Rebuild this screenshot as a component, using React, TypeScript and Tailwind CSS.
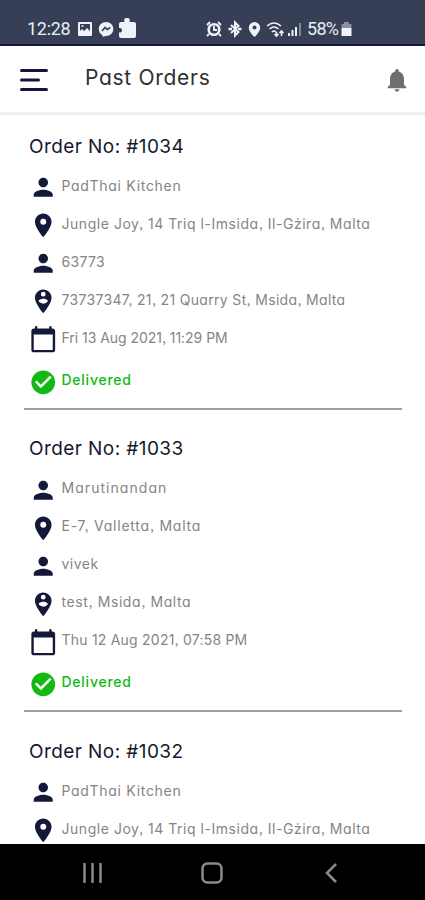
import type { ReactNode } from "react";
import {
  MdCalendarToday,
  MdCheckCircle,
  MdLocationOn,
  MdNotifications,
  MdPerson,
  MdPersonPinCircle,
} from "react-icons/md";

type Line = { text: string; spacing: string };
type Order = { id: string; lines: Line[] };

const padThai: Line = { text: "PadThai Kitchen", spacing: "tracking-[0.7px]" };
const jungleJoy: Line = { text: "Jungle Joy, 14 Triq l-Imsida, Il-Gżira, Malta", spacing: "tracking-[0.54px]" };

const orders: Order[] = [
  {
    id: "1034",
    lines: [
      padThai,
      jungleJoy,
      { text: "63773", spacing: "tracking-[0.3px]" },
      { text: "73737347, 21, 21 Quarry St, Msida, Malta", spacing: "tracking-[0.33px]" },
      { text: "Fri 13 Aug 2021, 11:29 PM", spacing: "tracking-[-0.04px]" },
    ],
  },
  {
    id: "1033",
    lines: [
      { text: "Marutinandan", spacing: "tracking-[1.05px]" },
      { text: "E-7, Valletta, Malta", spacing: "tracking-[0.77px]" },
      { text: "vivek", spacing: "tracking-[0.5px]" },
      { text: "test, Msida, Malta", spacing: "tracking-[0.6px]" },
      { text: "Thu 12 Aug 2021, 07:58 PM", spacing: "tracking-[0.22px]" },
    ],
  },
  { id: "1032", lines: [padThai, jungleJoy] },
];

const icons = [MdPerson, MdLocationOn, MdPerson, MdPersonPinCircle, MdCalendarToday];

function Row({ icon, children }: { icon: ReactNode; children: ReactNode }) {
  return (
    <div className="flex h-[38px] items-center gap-[4px] pl-[5px] text-[#141939]">
      {icon}
      {children}
    </div>
  );
}

function OrderCard({ order }: { order: Order }) {
  return (
    <article className="mb-[16.4px] h-[286px] shrink-0 border-b-2 border-[#a0a0a0]">
      <h2 className="flex h-11 items-center pt-[2px] pl-[5px] text-[19px] tracking-[0.42px] whitespace-nowrap text-[#17182f]">
        Order No: #{order.id}
      </h2>
      {order.lines.map((line, i) => {
        const Icon = icons[i];
        return (
          <Row key={i} icon={<Icon className="mt-[1px] size-[28.5px] shrink-0" />}>
            <span className={`-mt-[3px] text-[14px] whitespace-nowrap text-[#858585] ${line.spacing}`}>{line.text}</span>
          </Row>
        );
      })}
      {order.lines.length === 5 && (
        <div className="flex h-[46px] items-center gap-[4px] pl-[5px] text-[#13b913]">
          <MdCheckCircle className="mt-[2px] size-[28.5px]" />
          <span className="-mt-[3px] text-[14px] font-medium tracking-[0.75px]">Delivered</span>
        </div>
      )}
    </article>
  );
}

function StatusBar() {
  return (
    <div className="flex h-[46px] shrink-0 items-center border-b-2 border-[#15133f] bg-[#363f55] pt-[13px] pl-[27px] font-[Roboto,sans-serif] text-[18px] text-[#e8edf8]">
      <span className="w-[50px] tracking-[-0.3px]">12:28</span>
      <svg className="h-[22px] w-[60px]" viewBox="0 0 60 22" fill="#eef2fa">
        <rect x="1" y="4" width="14" height="14" rx="1" />
        <path d="M3 6h10v7l-3-3-3 3-2-2-2 2z" fill="#363f55" />
        <circle cx="5.5" cy="8" r="1" />
        <path d="M29 4c4.3 0 7.3 3 7.3 7s-3 7-7.3 7l-3 .8-1-2c-2-1.2-3.2-3.2-3.2-5.8 0-4 3-7 7.2-7z" />
        <path d="m25 13 3-3.5 2.2 2 3-2" fill="none" stroke="#363f55" strokeWidth="1.6" />
        <path d="M44 4h3.500c-1-2.500.3-4.300 2.500-4.300S53.500 1.500 52.500 4H57q2 0 2 2v12q0 2-2 2H44q-2 0-2-2v-3.500c4 .8 4-5.500 0-4.500V6q0-2 2-2z" />
      </svg>
      <svg className="ml-[68px] h-[22px] w-[100px]" viewBox="0 0 100 22" fill="none" stroke="#eef2fa">
        <circle cx="9" cy="11.5" r="5.3" strokeWidth="2.6" />
        <path d="M9 8v4h3M2 7l3-3m8 0 3 3M4 16l-2 2m12-2 2 2" strokeWidth="1.8" />
        <path d="m26 7 7.500 7-3.500 3.500v-13L33.500 8 26 15" strokeWidth="2" />
        <path d="M23.500 11h3.500m6 0h3.500" strokeWidth="2.400" />
        <path d="M49.500 4a5.700 5.700 0 0 0-5.700 5.700c0 4.300 5.700 9.300 5.700 9.300s5.700-5 5.700-9.300A5.700 5.700 0 0 0 49.500 4z" fill="#eef2fa" stroke="none" />
        <circle cx="49.5" cy="9.5" r="2" fill="#363f55" stroke="none" />
        <path d="M62 8q7-6 14 0M64.500 11q4.500-4 9 0M67 14q2-2 4 0M71.500 14v4m-2-2 2 2 2-2M76.500 18v-5m-2 2 2-2 2 2" strokeWidth="1.6" />
        <path d="M84 18v-3M87.500 18v-6M91 18V9" strokeWidth="2" />
        <path d="M95 18V5" strokeWidth="2" opacity=".4" />
      </svg>
      <span className="ml-[2px] w-[34px] tracking-[-0.7px]">58%</span>
      <svg className="h-[22px] w-[11px]" viewBox="0 0 11 22" fill="#f1f4fa">
        <path d="M3 4h5v2h2.500v4H.5V6H3z" opacity=".45" />
        <path d="M.5 10h10v8H.5z" />
      </svg>
    </div>
  );
}

export default function App() {
  return (
    <div className="flex h-[900px] w-full flex-col overflow-hidden bg-white font-[Inter,'Noto_Sans',sans-serif] [font-feature-settings:'cv11','ss03']">
      <StatusBar />
      <header className="flex h-[69px] shrink-0 items-center border-b-[3px] border-[#efefef] pr-[14px] pl-[19px]">
        <svg className="mt-[1px] h-[24px] w-[29px]" viewBox="0 0 29 24" stroke="#17133f" strokeWidth="3" strokeLinecap="round">
          <path d="M2.500 2.500h25M2.500 12h17M2.500 21.500h25" />
        </svg>
        <h1 className="-mt-[3px] ml-[37px] text-[21px] whitespace-nowrap tracking-[0.7px] text-[#303030]">Past Orders</h1>
        <MdNotifications className="mt-[1px] ml-auto size-[28px] text-[#6f6f6f]" />
      </header>
      <main className="flex min-h-0 flex-1 flex-col overflow-hidden pt-[9px] pr-[23px] pl-[24px]">
        {orders.map((order) => (
          <OrderCard key={order.id} order={order} />
        ))}
      </main>
      <nav className="flex h-[56px] shrink-0 items-center bg-black pt-[2px] pl-[82px]">
        <svg className="h-[22px] w-[260px]" viewBox="0 0 260 22" fill="none" stroke="#8b8b8b" strokeWidth="2.5">
          <path d="M2.500 1v20M10.500 1v20M18.500 1v20" />
          <rect x="120.5" y="1.5" width="19" height="19" rx="5" />
          <path d="m254 2-9 9 9 9" />
        </svg>
      </nav>
    </div>
  );
}
